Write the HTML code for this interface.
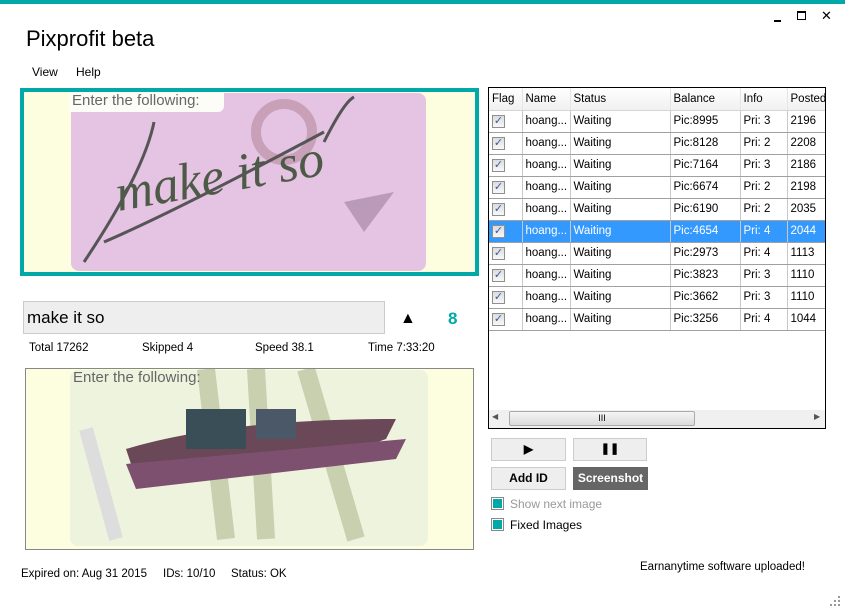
<!DOCTYPE html>
<html><head><meta charset="utf-8"><style>
*{margin:0;padding:0;box-sizing:border-box}
body{width:845px;height:611px;background:#fff;font-family:"Liberation Sans",sans-serif;position:relative;overflow:hidden;font-size:12px;color:#000}
.a{position:absolute}
table{border-collapse:collapse;font-size:11.5px}
td{border-right:1px solid #c8c8c8;border-bottom:1px solid #a0a0a0;height:22px;padding:0 3px;white-space:nowrap;overflow:hidden}
.cb{display:inline-block;width:13px;height:13px;border:1px solid #8e8f8f;background:linear-gradient(#dcdcdc,#f8f8f8);font-size:11px;line-height:11px;text-align:center;color:#3a5a9a}
.btn{position:absolute;background:#eee;border:1px solid #ccc;text-align:center;font-weight:bold;font-size:12px}
</style></head><body>
<div class="a" style="left:0;top:0;width:845px;height:4px;background:#00a8a8"></div>
<div class="a" style="left:774px;top:20px;width:7px;height:2px;background:#000"></div>
<div class="a" style="left:797px;top:11px;width:9px;height:9px;border:1px solid #000;border-top-width:2px"></div>
<div class="a" style="left:821px;top:8px;font-size:13px">✕</div>
<div class="a" style="left:26px;top:26px;font-size:22px;font-weight:300">Pixprofit beta</div>
<div class="a" style="left:32px;top:65px;font-size:12px">View</div>
<div class="a" style="left:76px;top:65px;font-size:12px">Help</div>

<div class="a" style="left:20px;top:88px;width:459px;height:188px;border:4px solid #00a8a8;background:#fdfde0;overflow:hidden">
 <div class="a" style="left:47px;top:1px;width:355px;height:178px;background:#e4c3e3;border-radius:8px"></div>
 <div class="a" style="left:45px;top:0px;width:155px;height:20px;background:#fdfdf8;color:#666;font-size:15px;padding-left:3px;border-radius:0 0 6px 0">Enter the following:</div>
 <svg class="a" style="left:0;top:0" width="451" height="180"><circle cx="260" cy="40" r="28" fill="none" stroke="#c8a0b8" stroke-width="10"/><path d="M60 170 Q120 80 130 30 M80 150 Q150 120 300 40 M300 50 Q320 10 330 5" stroke="#555" stroke-width="3" fill="none"/><path d="M320 110 L370 100 L340 140 Z" fill="#b99ab8"/></svg>
 <div class="a" style="left:90px;top:55px;font-size:52px;color:#4e5a48;transform:rotate(-10deg);font-family:'Liberation Serif',serif;font-style:italic">make it so</div>
</div>

<div class="a" style="left:23px;top:301px;width:362px;height:33px;background:#eee;border:1px solid #ccc;font-size:17px;padding:6px 3px">make it so</div>
<div class="a" style="left:400px;top:310px;font-size:16px">▲</div>
<div class="a" style="left:448px;top:309px;font-size:17px;font-weight:bold;color:#00a8a8">8</div>
<div class="a" style="left:29px;top:342px;font-size:11.5px">Total 17262</div>
<div class="a" style="left:142px;top:342px;font-size:11.5px">Skipped 4</div>
<div class="a" style="left:255px;top:342px;font-size:11.5px">Speed 38.1</div>
<div class="a" style="left:368px;top:342px;font-size:11.5px">Time 7:33:20</div>

<div class="a" style="left:25px;top:368px;width:449px;height:182px;border:1px solid #888;background:#fdfde0;overflow:hidden">
 <div class="a" style="left:44px;top:1px;width:358px;height:176px;background:#eef3de;border-radius:8px"></div>
 <svg class="a" style="left:0;top:0" width="449" height="180"><path d="M180 0 L200 170 M230 0 L240 170 M280 0 L330 170" stroke="#c8d0b0" stroke-width="18" fill="none"/><path d="M60 60 L90 170" stroke="#ddd" stroke-width="14"/><path d="M100 80 Q200 50 370 50 L360 70 Q250 110 110 110 Z" fill="#6a4858"/><rect x="160" y="40" width="60" height="40" fill="#3a4e58"/><rect x="230" y="40" width="40" height="30" fill="#4a5868"/><path d="M100 95 L380 70 L370 90 L110 120 Z" fill="#7e5070"/></svg>
 <div class="a" style="left:44px;top:0;width:150px;height:18px;color:#666;font-size:15px;padding-left:3px">Enter the following:</div>
</div>

<div class="a" style="left:21px;top:568px;font-size:11.5px">Expired on: Aug 31 2015</div>
<div class="a" style="left:163px;top:568px;font-size:11.5px">IDs: 10/10</div>
<div class="a" style="left:231px;top:568px;font-size:11.5px">Status: OK</div>
<div class="a" style="left:640px;top:561px;font-size:11.5px">Earnanytime software uploaded!</div>

<div class="a" style="left:488px;top:87px;width:338px;height:342px;border:1px solid #000;overflow:hidden;background:#fff">
<table style="width:400px;table-layout:fixed">
<colgroup><col style="width:33px"><col style="width:48px"><col style="width:100px"><col style="width:70px"><col style="width:47px"><col style="width:102px"></colgroup>
<tr style="background:linear-gradient(#fff,#f0f0f0)"><td style="height:21px;border-bottom:1px solid #d5d5d5;border-right:1px solid #e5e5e5">Flag</td><td style="border-bottom:1px solid #d5d5d5;border-right:1px solid #e5e5e5">Name</td><td style="border-bottom:1px solid #d5d5d5;border-right:1px solid #e5e5e5">Status</td><td style="border-bottom:1px solid #d5d5d5;border-right:1px solid #e5e5e5">Balance</td><td style="border-bottom:1px solid #d5d5d5;border-right:1px solid #e5e5e5">Info</td><td style="border-bottom:1px solid #d5d5d5">Posted</td></tr>
<tr><td><span class="cb">✓</span></td><td>hoang...</td><td>Waiting</td><td>Pic:8995</td><td>Pri: 3</td><td>2196</td></tr>
<tr><td><span class="cb">✓</span></td><td>hoang...</td><td>Waiting</td><td>Pic:8128</td><td>Pri: 2</td><td>2208</td></tr>
<tr><td><span class="cb">✓</span></td><td>hoang...</td><td>Waiting</td><td>Pic:7164</td><td>Pri: 3</td><td>2186</td></tr>
<tr><td><span class="cb">✓</span></td><td>hoang...</td><td>Waiting</td><td>Pic:6674</td><td>Pri: 2</td><td>2198</td></tr>
<tr><td><span class="cb">✓</span></td><td>hoang...</td><td>Waiting</td><td>Pic:6190</td><td>Pri: 2</td><td>2035</td></tr>
<tr style="background:#3399ff;color:#fff"><td><span class="cb">✓</span></td><td>hoang...</td><td>Waiting</td><td>Pic:4654</td><td>Pri: 4</td><td>2044</td></tr>
<tr><td><span class="cb">✓</span></td><td>hoang...</td><td>Waiting</td><td>Pic:2973</td><td>Pri: 4</td><td>1113</td></tr>
<tr><td><span class="cb">✓</span></td><td>hoang...</td><td>Waiting</td><td>Pic:3823</td><td>Pri: 3</td><td>1110</td></tr>
<tr><td><span class="cb">✓</span></td><td>hoang...</td><td>Waiting</td><td>Pic:3662</td><td>Pri: 3</td><td>1110</td></tr>
<tr><td><span class="cb">✓</span></td><td>hoang...</td><td>Waiting</td><td>Pic:3256</td><td>Pri: 4</td><td>1044</td></tr>
</table>
<div class="a" style="left:0;top:322px;width:336px;height:18px;background:#f0f0f0">
 <div class="a" style="left:3px;top:2px;font-size:8px;color:#555">◀</div>
 <div class="a" style="left:20px;top:1px;width:186px;height:15px;border:1px solid #aaa;border-radius:2px;background:linear-gradient(#f4f4f4,#dcdcdc);text-align:center;font-size:9px;line-height:13px">III</div>
 <div class="a" style="left:325px;top:2px;font-size:8px;color:#555">▶</div>
</div>
</div>

<div class="btn" style="left:491px;top:438px;width:75px;height:23px;line-height:21px;font-size:12px">▶</div>
<div class="btn" style="left:573px;top:438px;width:74px;height:23px;line-height:21px;font-size:11px">❚❚</div>
<div class="btn" style="left:491px;top:467px;width:75px;height:23px;line-height:21px">Add ID</div>
<div class="btn" style="left:573px;top:467px;width:75px;height:23px;line-height:23px;background:#666;border:none;color:#fff">Screenshot</div>
<div class="a" style="left:491px;top:497px;width:13px;height:13px;border:1px solid #888;background:#00a8a8;box-shadow:inset 0 0 0 1px #fff"></div>
<div class="a" style="left:510px;top:497px;color:#999">Show next image</div>
<div class="a" style="left:491px;top:518px;width:13px;height:13px;border:1px solid #888;background:#00a8a8;box-shadow:inset 0 0 0 1px #fff"></div>
<div class="a" style="left:510px;top:518px">Fixed Images</div>
<svg class="a" style="left:830px;top:596px" width="12" height="12"><g fill="#999"><rect x="8" y="0" width="2" height="2"/><rect x="4" y="4" width="2" height="2"/><rect x="8" y="4" width="2" height="2"/><rect x="0" y="8" width="2" height="2"/><rect x="4" y="8" width="2" height="2"/><rect x="8" y="8" width="2" height="2"/></g></svg>
</body></html>
